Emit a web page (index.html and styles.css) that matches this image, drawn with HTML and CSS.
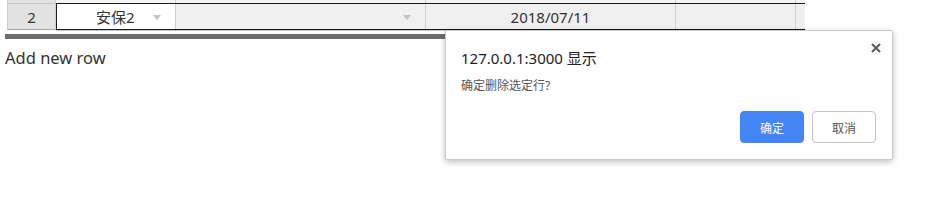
FILE: index.html
```html
<!DOCTYPE html>
<html lang="zh-CN">
<head>
  <meta charset="UTF-8">
  <title>Grid</title>
  <link rel="stylesheet" href="styles.css">
</head>
<body>

  <div class="grid">
    <!-- bottom edge of the previous row -->
    <div class="row row-prev">
      <div class="cell cell-num"></div>
      <div class="cell col-name"></div>
      <div class="cell col-type"></div>
      <div class="cell col-date"></div>
      <div class="cell col-end"></div>
      <div class="cell col-tail"></div>
    </div>

    <!-- selected row -->
    <div class="row row-sel">
      <div class="cell cell-num">2</div>
      <div class="sel-box">
        <div class="cell col-name active">安保2<span class="caret"></span></div>
        <div class="cell col-type"><span class="caret"></span></div>
        <div class="cell col-date">2018/07/11</div>
        <div class="cell col-end"></div>
        <div class="cell col-tail"></div>
      </div>
    </div>
    <div class="row-edge"></div>
  </div>

  <div class="hscroll"></div>
  <div class="add-row">Add new row</div>

  <!-- browser confirm() -->
  <div class="dialog">
    <span class="dialog-close">
      <svg width="10" height="10" viewBox="0 0 10 10"><path d="M1 1L9 9M9 1L1 9" stroke="#5a5a5a" stroke-width="2"/></svg>
    </span>
    <div class="dialog-title">127.0.0.1:3000 显示</div>
    <div class="dialog-msg">确定删除选定行?</div>
    <div class="dialog-btns">
      <button class="btn btn-ok">确定</button>
      <button class="btn btn-cancel">取消</button>
    </div>
  </div>

</body>
</html>
```

FILE: styles.css
```css
body {
  margin: 0;
  font-family: "Noto Sans", "Noto Sans CJK SC", sans-serif;
  color: #333;
  background: #fff;
}

.grid {
  padding-left: 7px;
}

.row {
  display: flex;
}

.cell {
  box-sizing: border-box;
  background: #f0f0f0;
  border-right: 1px solid #cfcfcf;
  font-size: 15px;
  color: #333;
  display: flex;
  align-items: center;
  justify-content: center;
  position: relative;
}

.row-prev {
  height: 3px;
  overflow: hidden;
}

.row-prev .cell {
  background: #f4f4f4;
}

.row-prev .cell-num {
  background: #e2e2e2;
}

.cell-num {
  width: 49px;
  background: #e2e2e2;
  border-left: 1px solid #cfcfcf;
  border-top: 1px solid #c8c8c8;
  border-bottom: 1px solid #a8a8a8;
  height: 27px;
}

.sel-box {
  display: flex;
  height: 27px;
  box-sizing: border-box;
  border-top: 1px solid #1a1a1a;
  border-bottom: 1px solid #1a1a1a;
  border-left: 1px solid #1a1a1a;
}

.row-prev .cell-num { height: 3px; border-top: 0; border-bottom: 0; }

.col-name { width: 120px; }
.col-type { width: 250px; }
.col-date { width: 250px; }
.col-end { width: 120px; }
.col-tail { width: 9px; border-right: 0; }

.row-sel .col-name { width: 119px; }

.cell.active {
  background: #fff;
  justify-content: flex-start;
  padding-left: 39px;
}

.caret {
  position: absolute;
  right: 14px;
  top: 11px;
  width: 0;
  height: 0;
  border-left: 4px solid transparent;
  border-right: 4px solid transparent;
  border-top: 5px solid #c4c4c4;
}

.row-edge {
  margin-left: 49px;
  width: 764px;
  height: 1px;
  background: #c8c8c8;
}

.hscroll {
  margin: 3px 0 0 5px;
  width: 460px;
  height: 5px;
  background: #6b6b6b;
}

.add-row {
  margin: 7px 0 0 5px;
  font-size: 16.5px;
  color: #333;
  line-height: 23px;
}

.dialog {
  position: absolute;
  left: 445px;
  top: 30px;
  width: 448px;
  height: 130px;
  box-sizing: border-box;
  background: #fff;
  border: 1px solid #c9c9c9;
  border-radius: 2px;
  box-shadow: 0 2px 6px rgba(0, 0, 0, 0.25);
  padding: 17px 16px 0 15px;
}

.dialog-close {
  position: absolute;
  right: 11px;
  top: 12px;
  line-height: 0;
}

.dialog-title {
  font-size: 15px;
  color: #222;
  line-height: 20px;
}

.dialog-msg {
  margin-top: 10px;
  font-size: 12px;
  color: #555;
  line-height: 16px;
}

.dialog-btns {
  display: flex;
  justify-content: flex-end;
  gap: 8px;
  margin-top: 17px;
}

.btn {
  width: 64px;
  height: 32px;
  border-radius: 4px;
  font-family: "Noto Sans CJK SC", sans-serif;
  font-size: 12px;
  cursor: pointer;
}

.btn-ok {
  background: #4285f4;
  border: 1px solid #4285f4;
  color: #fff;
}

.btn-cancel {
  background: #fff;
  border: 1px solid #c2c2c2;
  color: #555;
}
```
